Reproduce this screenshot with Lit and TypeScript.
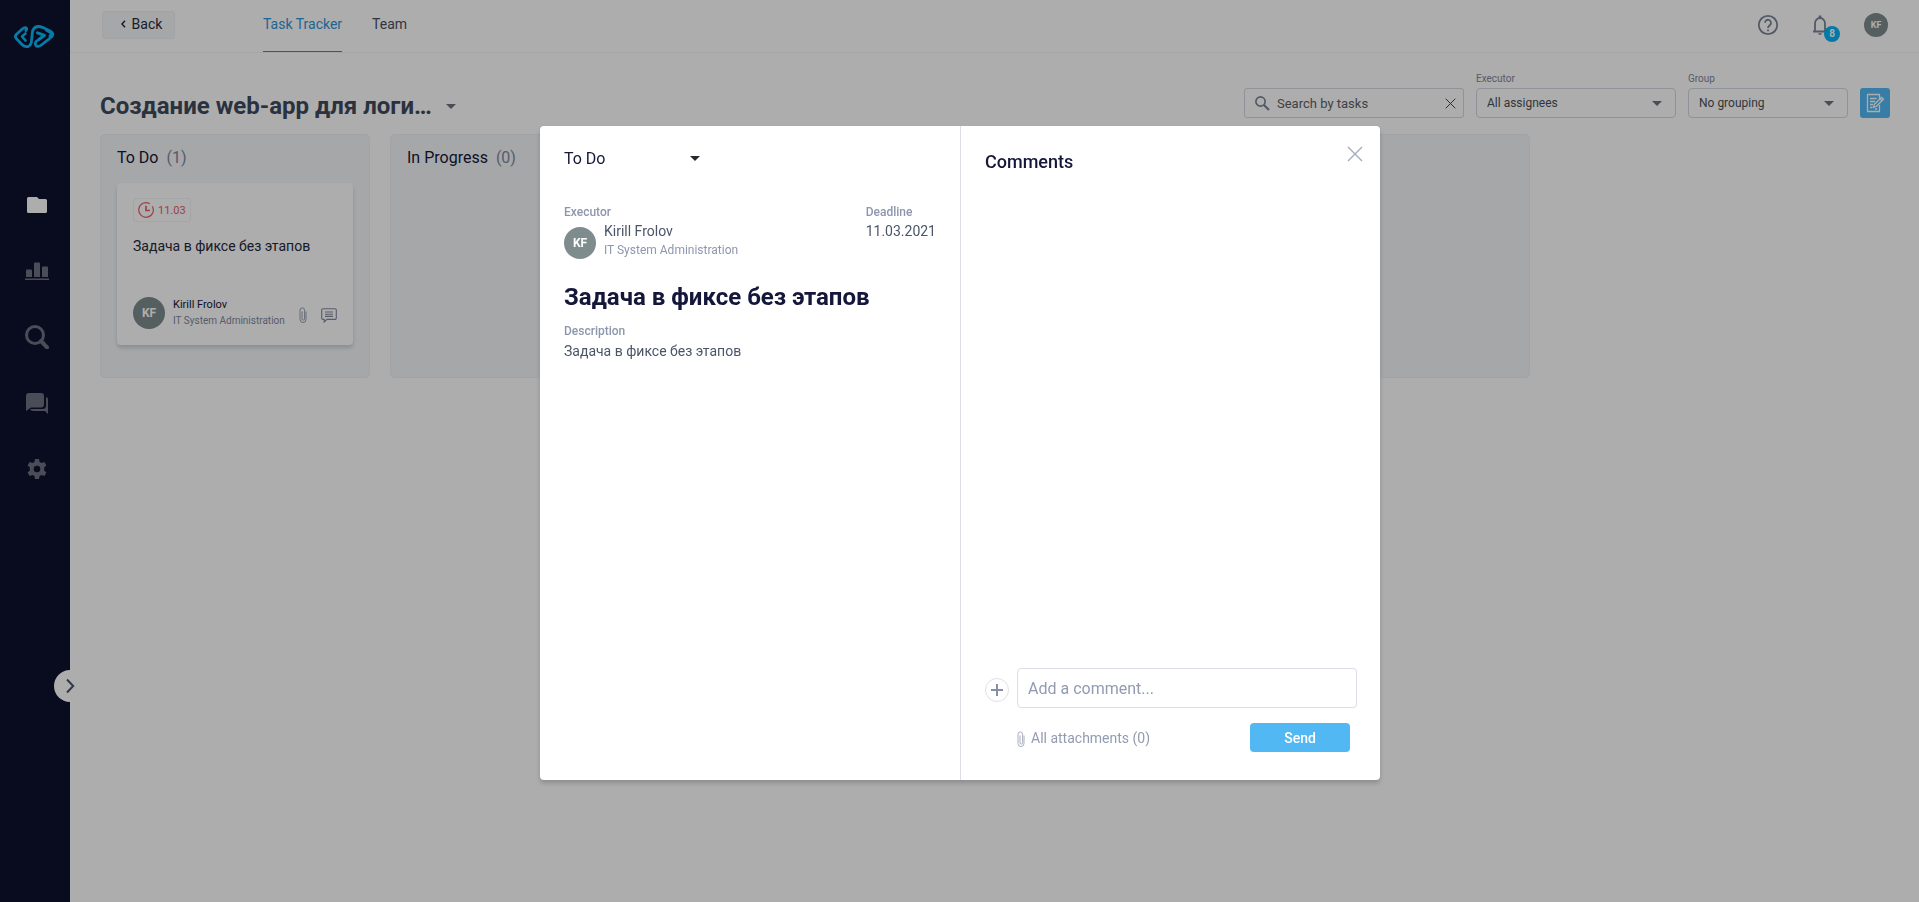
import { LitElement, html, css, svg, nothing } from "lit";
import { customElement, property, state } from "lit/decorators.js";

interface Task {
  title: string;
  due: string;
  assignee: string;
  department: string;
}

interface Column {
  name: string;
  tasks: Task[];
}

const base = css`
  *,
  *::before,
  *::after {
    box-sizing: border-box;
  }
  h1,
  h2,
  h3,
  p,
  ul {
    margin: 0;
    padding: 0;
  }
  button,
  input,
  select {
    font-family: inherit;
    margin: 0;
  }
  button {
    cursor: pointer;
    border: 0;
    padding: 0;
    background: none;
  }
  svg {
    display: block;
    flex: none;
  }
`;

const clip = svg`<path d="M7 4.500v8a3 3 0 0 1-6 0V3.200a2.300 2.300 0 0 1 4.600 0v8.600a1.300 1.300 0 0 1-2.600 0V4.500" fill="none" stroke="currentColor" stroke-width=".8"/>`;
const cross = svg`<path d="M1 1L15 15M15 1L1 15" fill="none" stroke="currentColor" stroke-width="1.4"/>`;

@customElement("user-avatar")
export class UserAvatar extends LitElement {
  @property() initials = "";

  static styles = css`
    :host {
      display: flex;
      flex: none;
      align-items: center;
      justify-content: center;
      width: 32px;
      height: 32px;
      border-radius: 50%;
      background: #7f8c8d;
      color: #fff;
      font-size: 12px;
      font-weight: 700;
    }
    :host([small]) {
      width: 24px;
      height: 24px;
      font-size: 9px;
    }
  `;

  render() {
    return html`${this.initials}`;
  }
}

@customElement("side-bar")
export class SideBar extends LitElement {
  static styles = [
    base,
    css`
      :host {
        position: relative;
        flex: none;
        width: 70px;
        background: #0e132d;
        color: #6e7081;
      }
      .logo {
        display: block;
        padding: 24px 0 0 13px;
        color: #0bb6f6;
      }
      .menu {
        display: flex;
        flex-direction: column;
        gap: 42px;
        padding: 144px 0 0 25px;
        list-style: none;
      }
      .item {
        display: block;
        width: 24px;
        height: 24px;
        color: inherit;
      }
      .active {
        color: #fff;
      }
      .expand {
        position: absolute;
        bottom: 200px;
        right: -16px;
        display: flex;
        align-items: center;
        justify-content: center;
        width: 32px;
        height: 32px;
        border-radius: 50%;
        background: #fff;
        color: #4a5568;
      }
    `,
  ];

  private icons = [
    { label: "Projects", art: svg`<path d="M2 5.500A1.500 1.500 0 0 1 3.500 4H12l2 2h6.500A1.500 1.500 0 0 1 22 7.500v11a1.500 1.500 0 0 1-1.500 1.500h-17A1.500 1.500 0 0 1 2 18.500z" fill="currentColor"/>` },
    { label: "Statistics", art: svg`<path d="M1 11.500a1 1 0 0 1 1-1h4a1 1 0 0 1 1 1V18H1zM9 4.500a1 1 0 0 1 1-1h4a1 1 0 0 1 1 1V18H9zM17 8.500a1 1 0 0 1 1-1h4a1 1 0 0 1 1 1V18h-6zM0 19.500h24V21H0z" fill="currentColor"/>` },
    { label: "Search", art: svg`<circle cx="10" cy="10" r="8.500" fill="none" stroke="currentColor" stroke-width="3"/><path d="M16 16L22 22.300" stroke="currentColor" stroke-width="4" stroke-linecap="round"/>` },
    { label: "Messages", art: svg`<path d="M4 2h12a3 3 0 0 1 3 3v8.500a3 3 0 0 1-3 3H6L1 20V5a3 3 0 0 1 3-3z" fill="currentColor"/><path d="M21 6q2 .3 2 2v15l-3-3H8.500q-2.500 0-3.500-2h12.500q3.500 0 3.500-3.500z" fill="currentColor"/>` },
    { label: "Settings", art: svg`<path fill-rule="evenodd" d="M10 2h4l.6 3 1.900 1.100 2.900-1 2 3.500-2.300 2q.25 1.400 0 2.800l2.300 2-2 3.500-2.900-1L14.600 19 14 22h-4l-.6-3-1.900-1.100-2.900 1-2-3.500 2.300-2q-.25-1.400 0-2.800l-2.300-2 2-3.500 2.900 1L9.400 5zM12 8.700a3.300 3.300 0 1 0 0 6.600 3.300 3.300 0 0 0 0-6.600z" fill="currentColor"/>` },
  ];

  render() {
    return html`
      <a class="logo" href="#" aria-label="Home">
        <svg width="42" height="25" viewBox="0 0 42 25" fill="none" stroke="currentColor" stroke-linecap="round" stroke-linejoin="round">
          <path stroke-width="2.800" d="M13 6.500Q14.500 4 12.500 3.600 11 3.500 9.500 4.800L3.500 10.300Q1.300 12.600 3.500 14.800L9 20.500Q12 23.400 15.500 22.300 18.300 21 18.600 16L19.300 9Q20 2.800 25 2.500 27 2.400 30 3.600L37.500 7.200Q41.500 9.500 38.500 13L29 20.500Q24.500 24 22.700 21.200 22 19.500 22.800 18L23.500 17"/>
          <path stroke-width="2.600" d="M12.500 9.500L9 12.500 12.500 16.500"/>
          <path stroke-width="3" d="M24.500 8.800L31.500 11.300 25.500 15.800"/>
          <path stroke-width="2" d="M33 6.300L38.200 9.300 36.500 12.500"/>
        </svg>
      </a>
      <ul class="menu">
        ${this.icons.map(
          (icon, i) => html`<li>
            <a class="item ${i === 0 ? "active" : ""}" href="#" aria-label=${icon.label}>
              <svg width="24" height="24" viewBox="0 0 24 24">${icon.art}</svg>
            </a>
          </li>`
        )}
      </ul>
      <button class="expand" aria-label="Expand menu">
        <svg width="10" height="16" viewBox="0 0 10 16"><path d="M2 1.500L8.200 8 2 14.500" fill="none" stroke="currentColor" stroke-width="2"/></svg>
      </button>
    `;
  }
}

@customElement("top-bar")
export class TopBar extends LitElement {
  static styles = [
    base,
    css`
      :host {
        display: flex;
        align-items: stretch;
        height: 53px;
        padding: 0 31px 0 32px;
        border-bottom: 1px solid #f3f3f5;
        font-size: 14px;
      }
      .back {
        display: flex;
        align-items: center;
        justify-content: center;
        gap: 6px;
        width: 73px;
        height: 28px;
        margin: 11px 88px 0 0;
        padding: 0 0 2px 6px;
        border: 1px solid #eef0f4;
        border-radius: 3px;
        background: #f4f7fa;
        color: #2a2a3c;
        font-size: 14px;
      }
      .tabs {
        display: flex;
        flex: 1;
        gap: 30px;
      }
      .tab {
        padding-top: 16px;
        line-height: 16px;
        border-bottom: 1px solid transparent;
        color: #4a5060;
        text-decoration: none;
      }
      .current {
        border-color: #2d8fd0;
        color: #2f96d6;
      }
      .tools {
        display: flex;
        align-items: center;
        gap: 28px;
        height: 50px;
        color: #7c8497;
      }
      .bell {
        position: relative;
        padding-right: 4px;
        color: inherit;
      }
      .help {
        color: inherit;
      }
      .count {
        position: absolute;
        top: 13px;
        left: 16px;
        width: 16px;
        height: 16px;
        border-radius: 50%;
        background: #03b3f7;
        color: #fff;
        font-size: 10px;
        line-height: 16px;
        font-weight: 700;
        text-align: center;
      }
    `,
  ];

  render() {
    return html`
      <button class="back">
        <svg width="5" height="8" viewBox="0 0 5 8"><path d="M4 .8L1 4l3 3.200" fill="none" stroke="currentColor" stroke-width="1.500"/></svg>
        Back
      </button>
      <nav class="tabs">
        <a class="tab current" href="#">Task Tracker</a>
        <a class="tab" href="#">Team</a>
      </nav>
      <div class="tools">
        <button class="help" aria-label="Help">
          <svg width="24" height="24" viewBox="0 0 24 24" fill="none" stroke="currentColor" stroke-width="1.800"><circle cx="12" cy="12" r="9.200"/><path d="M9 9.800a3 3 0 1 1 5 2.200c-1 .9-2 1.400-2 3"/><path d="M12 16.400v1.900"/></svg>
        </button>
        <button class="bell" aria-label="Notifications">
          <svg width="24" height="24" viewBox="0 0 24 24"><path d="M5 18.500h14M7 18V10.500a5 5.500 0 0 1 10 0V18" fill="none" stroke="currentColor" stroke-width="1.800"/><path d="M10.700 2.500h2.600v3h-2.600zM10 20.300h4q-.3 1.800-2 1.800t-2-1.800z" fill="currentColor"/></svg>
          <span class="count">8</span>
        </button>
        <user-avatar small initials="KF"></user-avatar>
      </div>
    `;
  }
}

@customElement("board-filters")
export class BoardFilters extends LitElement {
  static styles = [
    base,
    css`
      :host {
        display: flex;
        align-items: flex-end;
        gap: 12px;
        color: #4b4f57;
        font-size: 13px;
      }
      .search {
        display: flex;
        align-items: center;
        gap: 7px;
        width: 220px;
        height: 30px;
        padding: 0 7px 0 10px;
        border: 1px solid #d5d7e0;
        border-radius: 3px;
        color: #7c8497;
      }
      .query {
        flex: 1;
        min-width: 0;
        padding: 0;
        border: 0;
        outline: 0;
        background: none;
        color: #4b4f57;
        font-size: 13px;
      }
      .query::placeholder {
        color: #5d6169;
        opacity: 1;
      }
      .clear {
        color: #3d4048;
      }
      .field {
        display: grid;
        width: 200px;
        gap: 3px;
      }
      .narrow {
        width: 160px;
      }
      .label {
        color: #7f8698;
        font-size: 10px;
        line-height: 12px;
      }
      .box {
        display: grid;
        align-items: center;
      }
      .box > * {
        grid-area: 1 / 1;
      }
      .select {
        width: 100%;
        height: 30px;
        padding: 0 30px 0 10px;
        border: 1px solid #d5d7e4;
        border-radius: 4px;
        appearance: none;
        background: none;
        color: #4b4f57;
        font-size: 12px;
      }
      .caret {
        justify-self: end;
        margin-right: 14px;
        color: #6c7380;
        pointer-events: none;
      }
      .add {
        display: flex;
        align-items: center;
        justify-content: center;
        width: 30px;
        height: 30px;
        border-radius: 3px;
        background: #52b8f3;
        color: #fff;
      }
    `,
  ];

  private select(id: string, label: string, value: string, narrow: boolean) {
    return html`<div class="field ${narrow ? "narrow" : ""}">
      <label class="label" for=${id}>${label}</label>
      <div class="box">
        <select class="select" id=${id}>
          <option>${value}</option>
        </select>
        <svg class="caret" width="10" height="5" viewBox="0 0 10 5"><path d="M0 0h10L5 5z" fill="currentColor"/></svg>
      </div>
    </div>`;
  }

  render() {
    return html`
      <div class="search">
        <svg width="15" height="15" viewBox="0 0 15 15" fill="none" stroke="currentColor"><circle cx="5.500" cy="5.500" r="4.600" stroke-width="1.700"/><path d="M9 9l5 5" stroke-width="2.200"/></svg>
        <input class="query" type="text" placeholder="Search by tasks" aria-label="Search by tasks" />
        <button class="clear" aria-label="Clear search"><svg width="11" height="11" viewBox="0 0 16 16">${cross}</svg></button>
      </div>
      ${this.select("executor", "Executor", "All assignees", false)}
      ${this.select("group", "Group", "No grouping", true)}
      <button class="add" aria-label="Add task">
        <svg width="20" height="20" viewBox="0 0 20 20" fill="none" stroke="currentColor" stroke-width="1.300" stroke-linejoin="round"><path d="M14.500 6V1.500h-12v17h12V12"/><path d="M5 5.500h6.500M5 8.500h5M5 11.500h3M5 14.500h2.500M10 16h2"/><path d="M8.500 14.500l.8-3L16.500 4.300l2 2L11.300 13.500zM15 5.800l2 2"/></svg>
      </button>
    `;
  }
}

@customElement("task-card")
export class TaskCard extends LitElement {
  @property({ attribute: false }) task!: Task;

  static styles = [
    base,
    css`
      :host {
        display: flex;
        flex-direction: column;
        align-items: flex-start;
        min-height: 162px;
        padding: 15px 16px 16px;
        border-radius: 4px;
        background: #fff;
        box-shadow: 0 3px 4px rgba(0, 0, 0, 0.16);
      }
      .due {
        display: flex;
        align-items: center;
        gap: 4px;
        height: 24px;
        padding: 0 4px;
        border: 1px solid #f2f3f5;
        border-radius: 3px;
        color: #e5626a;
        font-size: 11px;
      }
      .title {
        padding-top: 16px;
        color: #25283c;
        font-size: 14px;
        font-weight: 400;
        line-height: 16px;
      }
      .footer {
        display: flex;
        align-items: center;
        width: 100%;
        margin-top: auto;
        color: #7f88a0;
      }
      .person {
        flex: 1;
        padding-left: 8px;
        line-height: 16px;
        white-space: nowrap;
        font-size: 10px;
      }
      .name {
        color: #14173a;
        font-size: 11px;
      }
      .marks {
        display: flex;
        align-items: center;
        gap: 14px;
        padding-top: 4px;
      }
    `,
  ];

  render() {
    const t = this.task;
    return html`
      <span class="due">
        <svg width="16" height="16" viewBox="0 0 16 16" fill="none" stroke="currentColor"><path d="M14.300 4.200A7.300 7.300 0 1 1 11.800 1.700M15 6.200q.3 1 .3 1.800" stroke-width="1.200"/><path d="M8 3.800v4.700h4" stroke-width="1.700"/></svg>
        ${t.due}
      </span>
      <h3 class="title">${t.title}</h3>
      <div class="footer">
        <user-avatar initials="KF"></user-avatar>
        <div class="person">
          <p class="name">${t.assignee}</p>
          <p>${t.department}</p>
        </div>
        <div class="marks">
          <svg width="8" height="16" viewBox="0 0 8 16">${clip}</svg>
          <svg width="16" height="15" viewBox="0 0 16 15" fill="none" stroke="currentColor" stroke-width="1.100"><path d="M2 .8h12a1.300 1.300 0 0 1 1.300 1.300v8a1.300 1.300 0 0 1-1.300 1.300H6L3.200 14v-2.600H2A1.300 1.300 0 0 1 .7 10V2.100A1.300 1.300 0 0 1 2 .8z"/><path d="M4 4h8M4 6.200h8M4 8.400h8"/></svg>
        </div>
      </div>
    `;
  }
}

@customElement("task-dialog")
export class TaskDialog extends LitElement {
  @property({ attribute: false }) task!: Task;

  static styles = [
    base,
    css`
      :host {
        position: fixed;
        inset: 0;
        display: flex;
        align-items: center;
        justify-content: center;
        padding: 4px 0 0 1px;
        background: rgba(0, 0, 0, 0.32);
      }
      .dialog {
        display: grid;
        grid-template-columns: 1fr 1fr;
        width: 840px;
        max-width: 100%;
        min-height: 654px;
        border-radius: 4px;
        background: #fff;
        box-shadow: 0 3px 5px rgba(0, 0, 0, 0.2);
        color: #4a5568;
        font-size: 14px;
        line-height: 16px;
      }
      .details {
        padding: 22px 24px;
      }
      .status {
        display: grid;
        align-items: center;
        width: 144px;
      }
      .status > * {
        grid-area: 1 / 1;
      }
      .select {
        height: 20px;
        padding: 0;
        border: 0;
        appearance: none;
        background: none;
        color: #14173a;
        font-size: 16px;
      }
      .caret {
        justify-self: end;
        margin-right: 8px;
        color: #26282e;
        pointer-events: none;
      }
      .facts {
        display: flex;
        justify-content: space-between;
        padding-top: 36px;
      }
      .label {
        color: #8d96ad;
        font-size: 12px;
        font-weight: 500;
        line-height: 16px;
      }
      .person {
        display: flex;
        align-items: flex-end;
        gap: 8px;
      }
      .name {
        padding-top: 3px;
        line-height: 16px;
      }
      .role {
        padding: 3px 0 1px;
        color: #8d96ad;
        font-size: 12px;
      }
      .date {
        padding-top: 3px;
      }
      .title {
        padding: 24px 0 12px;
        color: #14173a;
        font-size: 24px;
        font-weight: 700;
        line-height: 28px;
      }
      .text {
        padding-top: 4px;
      }
      .comments {
        display: flex;
        flex-direction: column;
        padding: 20px 23px 28px 24px;
        border-left: 1px solid #dcdee6;
      }
      .head {
        display: flex;
        flex: 1;
        align-items: flex-start;
        justify-content: space-between;
      }
      .heading {
        padding-top: 5px;
        color: #14173a;
        font-size: 18px;
        font-weight: 500;
        line-height: 22px;
      }
      .close {
        margin-right: -6px;
        color: #a3abbe;
      }
      .compose {
        display: grid;
        grid-template-columns: 24px 1fr;
        align-items: center;
        column-gap: 8px;
        row-gap: 15px;
      }
      .plus {
        display: flex;
        align-items: center;
        justify-content: center;
        width: 24px;
        height: 24px;
        margin-top: 4px;
        border: 1px solid #dfe1e8;
        border-radius: 50%;
        color: #858fa8;
      }
      .entry {
        width: 100%;
        height: 40px;
        padding: 0 10px;
        border: 1px solid #dcdcea;
        border-radius: 4px;
        background: #fff;
        color: #4a5568;
        font-size: 16px;
      }
      .entry::placeholder {
        color: #929bb0;
        opacity: 1;
      }
      .actions {
        display: flex;
        grid-column: 2;
        align-items: center;
        justify-content: space-between;
        padding-right: 7px;
      }
      .files {
        display: flex;
        align-items: flex-end;
        gap: 6px;
        color: #929bb0;
        font-size: 14px;
        line-height: 18px;
      }
      .send {
        width: 100px;
        height: 29px;
        border-radius: 4px;
        background: #52b8f3;
        color: #fff;
        font-size: 14px;
        font-weight: 500;
      }
    `,
  ];

  render() {
    const t = this.task;
    return html`
      <div class="dialog" role="dialog" aria-modal="true" aria-labelledby="task-title">
        <section class="details">
          <div class="status">
            <select class="select" aria-label="Status">
              <option>To Do</option>
              <option>In Progress</option>
            </select>
            <svg class="caret" width="10" height="5" viewBox="0 0 10 5"><path d="M0 0h10L5 5z" fill="currentColor"/></svg>
          </div>
          <div class="facts">
            <div>
              <p class="label">Executor</p>
              <div class="person">
                <user-avatar initials="KF"></user-avatar>
                <div>
                  <p class="name">${t.assignee}</p>
                  <p class="role">${t.department}</p>
                </div>
              </div>
            </div>
            <div>
              <p class="label">Deadline</p>
              <p class="date">${t.due}.2021</p>
            </div>
          </div>
          <h2 class="title" id="task-title">${t.title}</h2>
          <p class="label">Description</p>
          <p class="text">${t.title}</p>
        </section>
        <section class="comments">
          <div class="head">
            <h3 class="heading">Comments</h3>
            <button class="close" aria-label="Close"><svg width="16" height="16" viewBox="0 0 16 16">${cross}</svg></button>
          </div>
          <div class="compose">
            <button class="plus" aria-label="Attach file">
              <svg width="12" height="12" viewBox="0 0 12 12"><path d="M6 0v12M0 6h12" stroke="currentColor" stroke-width="2"/></svg>
            </button>
            <input class="entry" type="text" placeholder="Add a comment..." aria-label="Add a comment" />
            <div class="actions">
              <button class="files">
                <svg width="8" height="16" viewBox="0 0 8 16">${clip}</svg>
                All attachments (0)
              </button>
              <button class="send">Send</button>
            </div>
          </div>
        </section>
      </div>
    `;
  }
}

@customElement("app-root")
export class AppRoot extends LitElement {
  @state() private columns: Column[] = [
    {
      name: "To Do",
      tasks: [
        {
          title: "Задача в фиксе без этапов",
          due: "11.03",
          assignee: "Kirill Frolov",
          department: "IT System Administration",
        },
      ],
    },
    { name: "In Progress", tasks: [] },
    { name: "", tasks: [] },
    { name: "", tasks: [] },
    { name: "", tasks: [] },
  ];

  static styles = [
    base,
    css`
      :host {
        display: flex;
        min-height: 100vh;
        background: #fff;
        font-family: Roboto, "Liberation Sans", sans-serif;
      }
      .main {
        flex: 1;
        min-width: 0;
      }
      .page {
        padding: 20px 29px 20px 30px;
      }
      .heading {
        display: flex;
        align-items: flex-start;
        justify-content: space-between;
      }
      .project {
        display: flex;
        align-items: center;
        gap: 13px;
        padding-top: 19px;
        color: #6c7380;
      }
      .title {
        width: 333px;
        overflow: hidden;
        color: #3f4a5d;
        font-size: 24px;
        font-weight: 700;
        line-height: 28px;
        text-overflow: ellipsis;
        white-space: nowrap;
      }
      .board {
        display: flex;
        gap: 20px;
        padding-top: 14px;
      }
      .column {
        flex: 0 0 270px;
        min-height: 244px;
        padding: 15px 16px;
        border: 1px solid #eef1f6;
        border-radius: 5px;
        background: #f4f7fa;
      }
      .name {
        padding: 0 0 17px;
        color: #14173a;
        font-size: 16px;
        font-weight: 400;
        line-height: 16px;
      }
      .count {
        padding-left: 4px;
        color: #8088a0;
      }
    `,
  ];

  render() {
    return html`
      <side-bar></side-bar>
      <div class="main">
        <top-bar></top-bar>
        <main class="page">
          <div class="heading">
            <div class="project">
              <h1 class="title">Создание web-app для логистики</h1>
              <svg width="10" height="5" viewBox="0 0 10 5"><path d="M0 0h10L5 5z" fill="currentColor"/></svg>
            </div>
            <board-filters></board-filters>
          </div>
          <div class="board">
            ${this.columns.map(
              (column) => html`<section class="column">
                ${column.name
                  ? html`<h2 class="name">${column.name} <span class="count">(${column.tasks.length})</span></h2>`
                  : nothing}
                ${column.tasks.map((task) => html`<task-card .task=${task}></task-card>`)}
              </section>`
            )}
          </div>
        </main>
      </div>
      <task-dialog .task=${this.columns[0].tasks[0]}></task-dialog>
    `;
  }
}
